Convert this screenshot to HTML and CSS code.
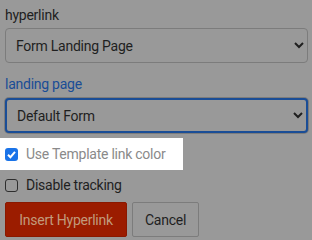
FILE: index.html
```html
<!DOCTYPE html>
<html>
<head>
<meta charset="utf-8">
<link rel="stylesheet" href="styles.css">
</head>
<body>
<div class="panel">
  <div class="label">hyperlink</div>
  <select class="sel">
    <option>Form Landing Page</option>
  </select>
  <div class="label link">landing page</div>
  <select class="sel focus">
    <option>Default Form</option>
  </select>
  <div class="spot">
    <span class="cb checked"><svg viewBox="0 0 13 13" width="13" height="13"><path d="M3 6.8 L5.4 9.2 L10 3.8" fill="none" stroke="#fff" stroke-width="2"/></svg></span>
    <span class="cbtext">Use Template link color</span>
  </div>
  <div class="row">
    <span class="cb"></span>
    <span class="text">Disable tracking</span>
  </div>
  <div class="buttons">
    <button class="btn primary">Insert Hyperlink</button>
    <button class="btn cancel">Cancel</button>
  </div>
</div>
</body>
</html>
```
FILE: styles.css
```css
html, body {
  margin: 0;
  padding: 0;
  background: #999999;
  font-family: Roboto, "Liberation Sans", sans-serif;
  font-size: 14px;
  letter-spacing: -0.25px;
  color: #1f1f1f;
}
.panel {
  padding: 5px 4px 0 5px;
  display: flex;
  flex-direction: column;
  align-items: flex-start;
}
.label {
  height: 20px;
  line-height: 20px;
  margin-bottom: 3px;
}
.link {
  color: #1a4d96;
  margin-top: 11px;
  margin-bottom: 4px;
}
.sel {
  width: 303px;
  height: 35px;
  border: 1px solid #7c7c7c;
  border-radius: 4px;
  background-color: #999999;
  color: #1f1f1f;
  font-family: inherit;
  font-size: 14px;
  letter-spacing: -0.25px;
  padding: 0 6px;
  margin: 0;
}
.sel.focus {
  border: 2px solid #1a4d96;
  box-shadow: 0 0 0 1px #7c7c7c;
}
.spot {
  margin-left: -5px;
  margin-top: 5px;
  width: 183px;
  height: 32px;
  background: #ffffff;
  display: flex;
  align-items: center;
  gap: 8px;
  padding-left: 5px;
  box-sizing: border-box;
}
.cb {
  width: 13px;
  height: 13px;
  box-sizing: border-box;
  border: 1px solid #2e2e2e;
  border-radius: 3px;
  display: inline-flex;
  flex: none;
}
.cb.checked {
  background: #1a73e8;
  border: none;
}
.cbtext {
  color: #8a8a8a;
}
.row {
  display: flex;
  align-items: center;
  gap: 8px;
  margin-top: 7px;
  height: 16px;
}
.buttons {
  display: flex;
  gap: 5px;
  margin-top: 9px;
}
.btn {
  height: 35px;
  padding: 0;
  border: 1px solid #7c7c7c;
  border-radius: 2px;
  background: #999999;
  color: #1f1f1f;
  font-family: inherit;
  font-size: 14px;
  letter-spacing: -0.25px;
  white-space: nowrap;
}
.btn.primary {
  background: #9b1c00;
  border-color: #8a1800;
  color: #c29a7c;
  width: 122px;
}
.btn.cancel {
  width: 67px;
}
```
